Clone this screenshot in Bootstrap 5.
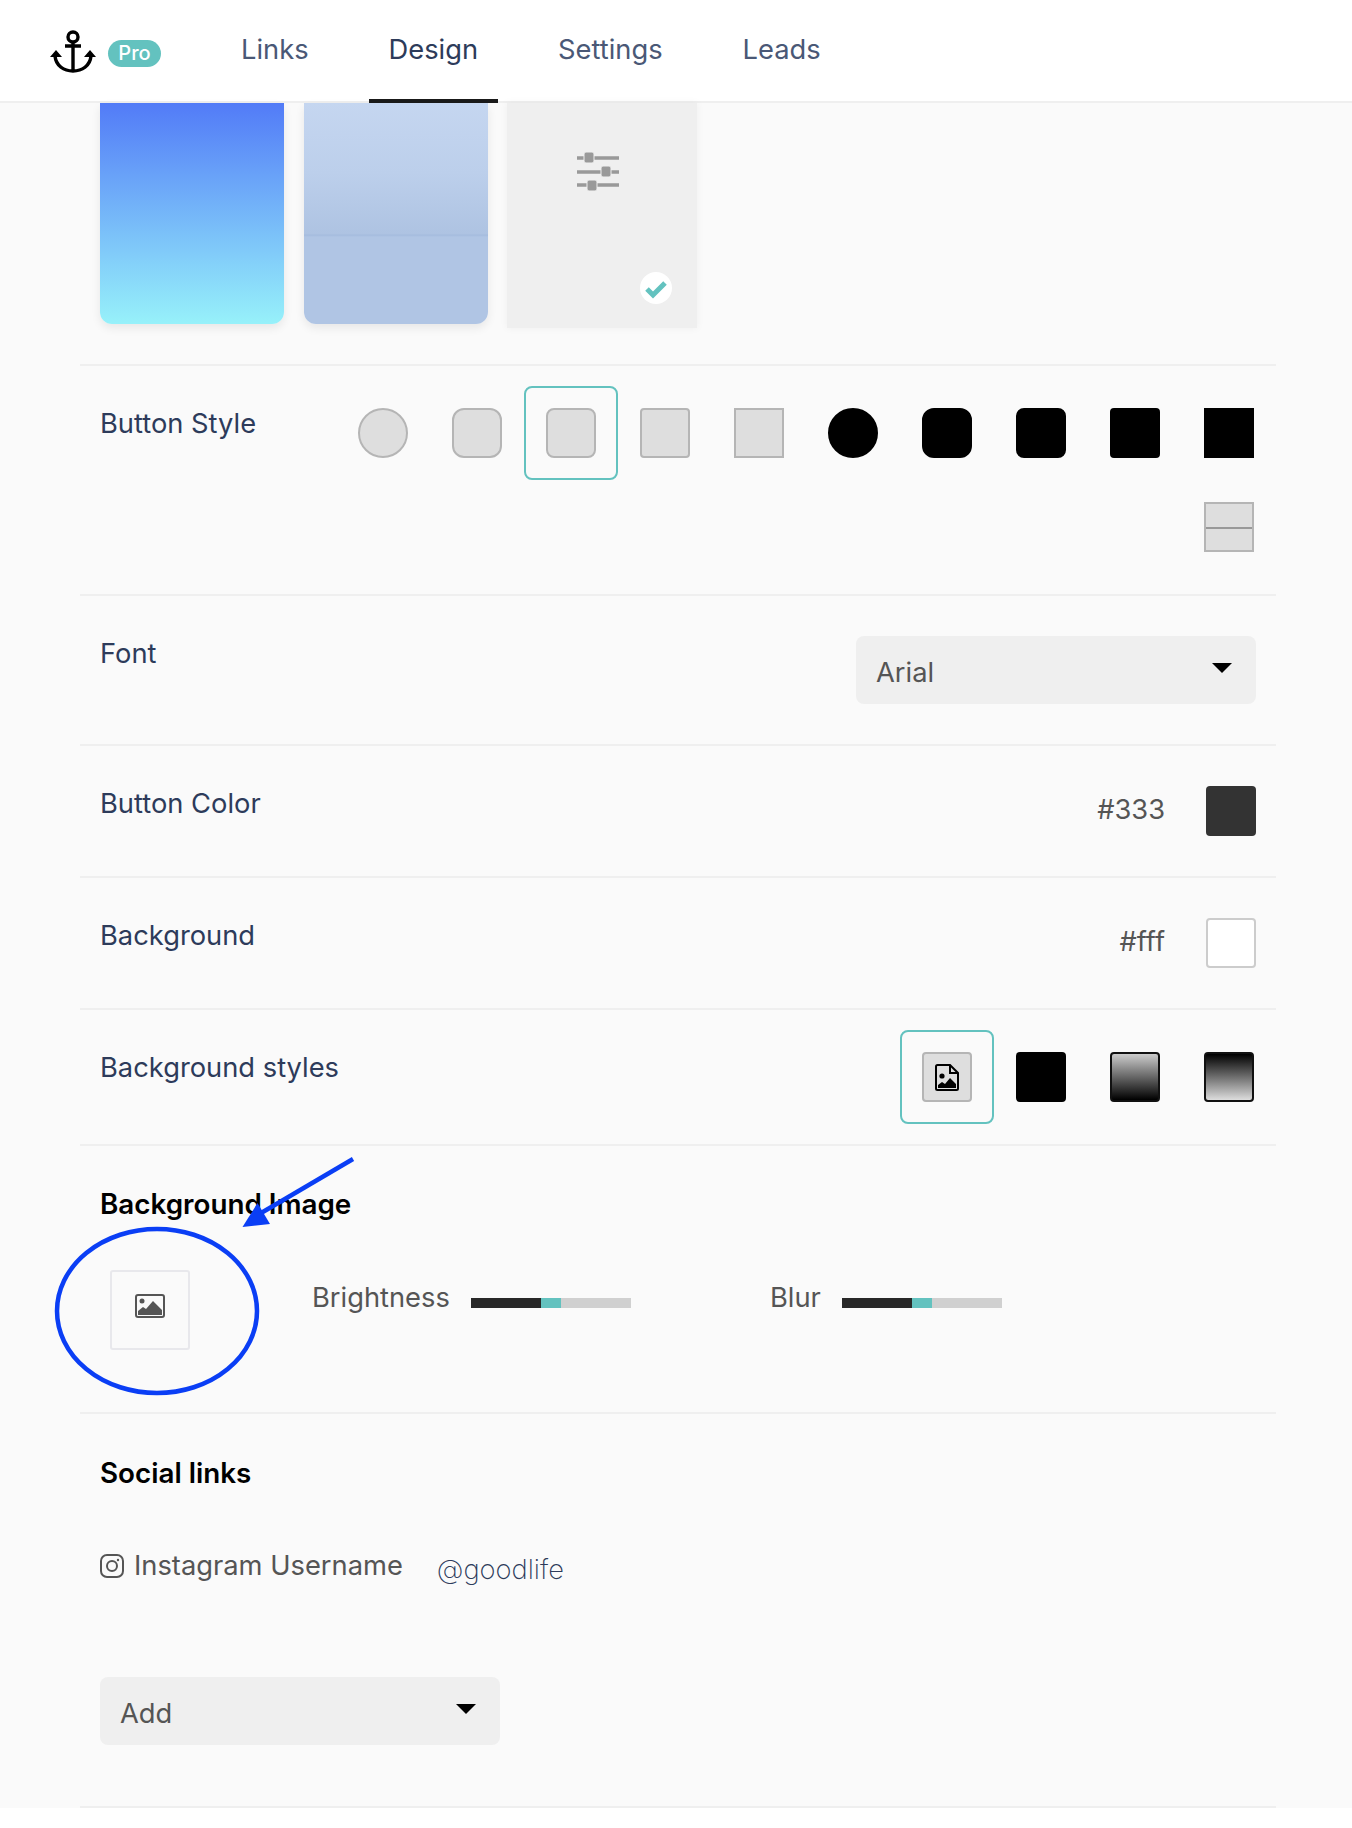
<!DOCTYPE html>
<html lang="en">
<head>
    <meta charset="UTF-8">
    <meta name="viewport" content="width=device-width, initial-scale=1.0">
    <title>Design</title>
    <link href="https://cdn.jsdelivr.net/npm/bootstrap@5.3.0/dist/css/bootstrap.min.css" rel="stylesheet">
    <style>
        body { background: #fff; font-family: Inter, "Liberation Sans", sans-serif; font-size: 27.3px; line-height: 40px; color: #555; }
        .app-top { height: 103px; background: #fff; border-bottom: 2px solid #efefef; }
        .logo-wrap { width: 221px; padding-left: 50px; }
        .pro-tag { width: 53px; height: 27px; margin-left: 10px; margin-top: 16px; border-radius: 14px; background: #63c2bf; color: #fff; font-size: 20px; font-weight: 500; line-height: 27px; text-align: center; }
        .app-top .nav { gap: 40px; }
        .app-top .nav-link { height: 103px; padding: 30px 20px 0; color: #4a5876; line-height: 40px; }
        .app-top .nav-link.current { color: #2d3b5a; border-bottom: 4px solid #1a1a1a; margin-bottom: -1px; }
        .panel { background: #fafafa; }
        .set-row { margin: 0 76px 0 80px; padding: 0 20px; border-bottom: 2px solid #efefef; }
        .set-row.cells { padding-right: 0; padding-top: 20px; padding-bottom: 20px; }
        .set-row.plain { padding-top: 40px; padding-bottom: 40px; }
        .set-label { margin-top: 18px; color: #2d3b5a; }
        .plain .set-label { margin-top: -2px; }
        .theme-row { height: 263px; padding-bottom: 0; }
        .theme-tile { width: 184px; height: 221px; border-radius: 0 0 12px 12px; box-shadow: 0 4px 10px rgba(0, 0, 0, .08); }
        .tile-blue { background: linear-gradient(#527bf7, #97f1fa); }
        .tile-sky { background: linear-gradient(#c5d6f0 0, #bccfeb 70px, #aec3e2 131px, #a4bbdd 132px, #b0c5e4 134px, #b0c5e4 100%); }
        .tile-custom { width: 190px; height: 225px; background: #efefef; border-radius: 0; margin-left: 3px; position: relative; box-shadow: 0 0 8px rgba(0, 0, 0, .05); }
        .tile-custom .sliders { position: absolute; left: 70px; top: 49px; }
        .tile-custom .tick { position: absolute; left: 133px; top: 169px; }
        .opt-list { width: 940px; }
        .opt-cell { width: 94px; height: 94px; border: 2px solid transparent; border-radius: 8px; }
        .opt-cell.picked { border-color: #63c2bf; }
        .swatch { width: 50px; height: 50px; background: #dedede; border: 2px solid #b5b5b5; }
        .swatch.dark { background: #000; border-color: #000; }
        .r-full { border-radius: 50%; }
        .r-lg { border-radius: 12px; }
        .r-md { border-radius: 8px; }
        .r-sm { border-radius: 4px; }
        .swatch-split { position: relative; }
        .swatch-split::after { content: ""; position: absolute; left: 0; right: 0; top: 23px; height: 2px; background: #999; }
        .grad-a { background: linear-gradient(#ccc, #000); border-color: #111; }
        .grad-b { background: linear-gradient(#000, #ddd); border-color: #111; }
        .pick-select { height: 68px; background: #efefef; border: 0; border-radius: 8px; color: #555; font-size: 27.3px; padding: 0 24px 0 20px; line-height: 1; }
        .pick-select:hover, .pick-select:active { background: #efefef; color: #555; }
        .pick-select::after { margin: 0; border-top: 10px solid #000; border-left: 10px solid transparent; border-right: 10px solid transparent; border-bottom: 0; transform: translateY(-2px); }
        .pick-select span { padding-top: 5px; }
        .font-select { width: 400px; }
        .add-select { width: 400px; }
        .value-text { margin-right: 41px; margin-top: 4px; }
        .color-box { width: 50px; height: 50px; border-radius: 4px; }
        .color-dark { background: #333; }
        .color-white { background: #fff; border: 2px solid #ccc; }
        .sec-title { font-size: 27.8px; font-weight: 600; color: #000; }
        .image-row { padding-top: 38px; padding-bottom: 62px; position: relative; }
        .upload-box { width: 80px; height: 80px; margin: 46px 122px 0 10px; padding-bottom: 8px; border: 2px solid #e8e8ec; border-radius: 3px; }
        .slide-group { width: 458px; padding-top: 8px; margin-top: 46px; }
        .slide-bar { width: 160px; height: 10px; margin: 20px 0 0 21px; background: #d0d0d0; }
        .slide-bar i { display: block; width: 70px; height: 10px; background: #282828; }
        .slide-bar b { display: block; width: 20px; height: 10px; background: #63c2bf; }
        .social-row { padding-top: 39px; padding-bottom: 61px; }
        .insta-line { margin-top: 53px; margin-bottom: 87px; }
        .insta-line svg { margin-right: 10px; }
        .insta-user { margin-left: 34px; margin-top: 4px; color: #2d3b5a; font-weight: 200; }
        .page-end { height: 16px; }
        .mark-up { position: absolute; left: -80px; top: -1146px; pointer-events: none; }
    </style>
</head>
<body>
    <div class="app-top d-flex">
        <div class="logo-wrap d-flex align-items-start pt-4">
            <svg width="48" height="46" viewBox="0 0 48 46" class="flex-shrink-0" style="margin-top:6px" fill="none" stroke="#000" stroke-width="3.4">
                <circle cx="23" cy="7" r="5"/>
                <path d="M15 16h16M23 12v30"/>
                <path d="M5 26c1 10 9 15 18 15s17-5 18-15"/>
                <path d="M0 27l6-7 6 7zM34 27l6-7 6 7z" fill="#000" stroke="none"/>
            </svg>
            <span class="pro-tag">Pro</span>
        </div>
        <ul class="nav">
            <li class="nav-item"><a class="nav-link" href="#">Links</a></li>
            <li class="nav-item"><a class="nav-link current" href="#">Design</a></li>
            <li class="nav-item"><a class="nav-link" href="#">Settings</a></li>
            <li class="nav-item"><a class="nav-link" href="#">Leads</a></li>
        </ul>
    </div>

    <div class="panel">
        <!-- Theme tiles -->
        <div class="set-row theme-row d-flex gap-3">
            <div class="theme-tile tile-blue"></div>
            <div class="theme-tile tile-sky" style="margin-left:4px"></div>
            <div class="theme-tile tile-custom">
                <svg class="sliders" width="42" height="40" viewBox="0 0 42 40" stroke="#999" stroke-width="3.5">
                    <path d="M0 6h42M0 20h42M0 33h42"/>
                    <rect x="7" y="0" width="10" height="11" rx="2" fill="#999" stroke="#efefef" stroke-width="1"/>
                    <rect x="24" y="14" width="10" height="11" rx="2" fill="#999" stroke="#efefef" stroke-width="1"/>
                    <rect x="10" y="28" width="10" height="11" rx="2" fill="#999" stroke="#efefef" stroke-width="1"/>
                </svg>
                <svg class="tick" width="32" height="32" viewBox="0 0 32 32">
                    <circle cx="16" cy="16" r="16" fill="#fff"/>
                    <path d="M7 17l6 6 12-12" fill="none" stroke="#63c2bf" stroke-width="5"/>
                </svg>
            </div>
        </div>

        <!-- Button style -->
        <div class="set-row cells d-flex justify-content-between align-items-start">
            <div class="set-label">Button Style</div>
            <div class="opt-list d-flex flex-wrap justify-content-end">
                <div class="opt-cell d-flex align-items-center justify-content-center"><div class="swatch r-full"></div></div>
                <div class="opt-cell d-flex align-items-center justify-content-center"><div class="swatch r-lg"></div></div>
                <div class="opt-cell picked d-flex align-items-center justify-content-center"><div class="swatch r-md"></div></div>
                <div class="opt-cell d-flex align-items-center justify-content-center"><div class="swatch r-sm"></div></div>
                <div class="opt-cell d-flex align-items-center justify-content-center"><div class="swatch"></div></div>
                <div class="opt-cell d-flex align-items-center justify-content-center"><div class="swatch dark r-full"></div></div>
                <div class="opt-cell d-flex align-items-center justify-content-center"><div class="swatch dark r-lg"></div></div>
                <div class="opt-cell d-flex align-items-center justify-content-center"><div class="swatch dark r-md"></div></div>
                <div class="opt-cell d-flex align-items-center justify-content-center"><div class="swatch dark r-sm"></div></div>
                <div class="opt-cell d-flex align-items-center justify-content-center"><div class="swatch dark"></div></div>
                <div class="opt-cell d-flex align-items-center justify-content-center"><div class="swatch swatch-split"></div></div>
            </div>
        </div>

        <!-- Font -->
        <div class="set-row plain d-flex justify-content-between align-items-start">
            <div class="set-label">Font</div>
            <button type="button" class="btn pick-select font-select dropdown-toggle d-flex justify-content-between align-items-center"><span>Arial</span></button>
        </div>

        <!-- Button color -->
        <div class="set-row plain d-flex align-items-start">
            <div class="set-label me-auto">Button Color</div>
            <div class="value-text">#333</div>
            <div class="color-box color-dark"></div>
        </div>

        <!-- Background -->
        <div class="set-row plain d-flex align-items-start">
            <div class="set-label me-auto">Background</div>
            <div class="value-text">#fff</div>
            <div class="color-box color-white"></div>
        </div>

        <!-- Background styles -->
        <div class="set-row cells d-flex justify-content-between align-items-start">
            <div class="set-label">Background styles</div>
            <div class="d-flex">
                <div class="opt-cell picked d-flex align-items-center justify-content-center">
                    <div class="swatch r-sm d-flex align-items-center justify-content-center">
                        <svg width="24" height="27" viewBox="0 0 24 27" fill="none" stroke="#000" stroke-width="2">
                            <path d="M1 2.5a1.5 1.5 0 0 1 1.500-1.500H15l8 8v15.500a1.500 1.500 0 0 1-1.500 1.500h-19a1.500 1.500 0 0 1-1.500-1.500z"/>
                            <path d="M15 1v8h8"/>
                            <circle cx="7" cy="12" r="2.600" fill="#000" stroke="none"/>
                            <path d="M3 24v-3l4-3 3 2 5-6 6 6v4z" fill="#000" stroke="none"/>
                        </svg>
                    </div>
                </div>
                <div class="opt-cell d-flex align-items-center justify-content-center"><div class="swatch dark r-sm"></div></div>
                <div class="opt-cell d-flex align-items-center justify-content-center"><div class="swatch grad-a r-sm"></div></div>
                <div class="opt-cell d-flex align-items-center justify-content-center"><div class="swatch grad-b r-sm"></div></div>
            </div>
        </div>

        <!-- Background image -->
        <div class="set-row image-row">
            <div class="sec-title">Background Image</div>
            <div class="d-flex align-items-start">
                <div class="upload-box d-flex align-items-center justify-content-center">
                    <svg width="30" height="24" viewBox="0 0 30 24" fill="none">
                        <rect x="1" y="1" width="28" height="22" rx="2" stroke="#555" stroke-width="2"/>
                        <circle cx="7" cy="7" r="2.500" fill="#555"/>
                        <path d="M3 21v-4l5-4 3 2 7-8 9 9v5z" fill="#555"/>
                    </svg>
                </div>
                <div class="slide-group d-flex">
                    <span>Brightness</span>
                    <div class="slide-bar d-flex"><i></i><b></b></div>
                </div>
                <div class="slide-group d-flex">
                    <span>Blur</span>
                    <div class="slide-bar d-flex"><i></i><b></b></div>
                </div>
            </div>
            <!-- Annotation drawn over the section -->
            <svg class="mark-up" width="1352" height="1400" viewBox="0 0 1352 1400" fill="none">
                <ellipse cx="157" cy="1311" rx="100" ry="82" stroke="#0a3ef5" stroke-width="4.500"/>
                <path d="M353 1159L256 1216" stroke="#0a3ef5" stroke-width="4.500"/>
                <path d="M242.500 1227L257.500 1203L270 1224z" fill="#0a3ef5"/>
            </svg>
        </div>

        <!-- Social links -->
        <div class="set-row social-row">
            <div class="sec-title">Social links</div>
            <div class="insta-line d-flex align-items-start">
                <svg width="24" height="24" viewBox="0 0 24 24" fill="none" stroke="#555" stroke-width="2" style="margin-top:8px">
                    <rect x="1" y="1" width="22" height="22" rx="6"/>
                    <circle cx="12" cy="12" r="5"/>
                    <circle cx="18" cy="6" r="1.200" fill="#555" stroke="none"/>
                </svg>
                <span>Instagram Username</span>
                <span class="insta-user">@goodlife</span>
            </div>
            <button type="button" class="btn pick-select add-select dropdown-toggle d-flex justify-content-between align-items-center"><span>Add</span></button>
        </div>
    </div>
    <div class="page-end"></div>

    <script src="https://cdn.jsdelivr.net/npm/bootstrap@5.3.0/dist/js/bootstrap.bundle.min.js"></script>
</body>
</html>
